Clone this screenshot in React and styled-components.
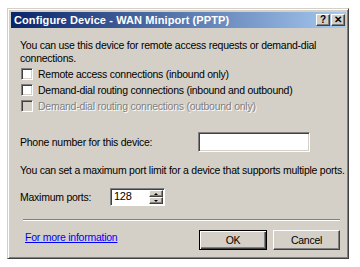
import React from 'react';
import styled, { createGlobalStyle } from 'styled-components';

const Global = createGlobalStyle`
  body {
    margin: 0;
    background: #fff;
    font-family: "Liberation Sans", Arial, sans-serif;
  }
`;

const Page = styled.div`
  padding: 8px 0 0 7px;
`;

const Window = styled.div`
  width: 342px;
  height: 251px;
  box-sizing: border-box;
  background: #d4d0c8;
  border: 1px solid;
  border-color: #d4d0c8 #404040 #404040 #d4d0c8;
  box-shadow: inset 1px 1px 0 #fff, inset -1px -1px 0 #808080;
  padding: 3px 2px 3px 3px;
  display: flex;
  flex-direction: column;
`;

const TitleBar = styled.div`
  height: 16px;
  flex-shrink: 0;
  display: flex;
  align-items: center;
  padding: 0 1px 0 3px;
  background: linear-gradient(to right, #0a246a, #a6caf0);
`;

const Title = styled.div`
  flex: 1;
  color: #fff;
  font-weight: bold;
  font-size: 11px;
  letter-spacing: 0.1px;
  white-space: nowrap;
`;

const CapButton = styled.div`
  width: 14px;
  height: 12px;
  box-sizing: border-box;
  background: #d4d0c8;
  border: 1px solid;
  border-color: #fff #404040 #404040 #fff;
  box-shadow: inset -1px -1px 0 #808080;
  margin-left: ${p => p.gap || 0}px;
  font-size: 10px;
  font-weight: bold;
  line-height: 10px;
  text-align: center;
  color: #000;
`;

const Body = styled.div`
  flex: 1;
  padding: 11px 6px 0 9px;
  font-size: 10.5px;
  letter-spacing: -0.25px;
  color: #000;
  display: flex;
  flex-direction: column;
  white-space: nowrap;
`;

const Para = styled.div`
  line-height: 13px;
  margin-top: ${p => p.top || 0}px;
`;

const CheckRow = styled.label`
  display: flex;
  align-items: center;
  gap: 5px;
  height: 16px;
  padding-left: 1px;
  margin-top: ${p => p.top || 0}px;
  color: ${p => (p.disabled ? '#808080' : '#000')};
  text-shadow: ${p => (p.disabled ? '1px 1px 0 #fff' : 'none')};
`;

const Box = styled.span`
  width: 12px;
  height: 12px;
  flex-shrink: 0;
  box-sizing: border-box;
  background: ${p => (p.disabled ? '#d4d0c8' : '#fff')};
  border: 1px solid;
  border-color: #808080 #fff #fff #808080;
  box-shadow: inset 1px 1px 0 #404040, inset -1px -1px 0 #d4d0c8;
`;

const FieldRow = styled.div`
  display: flex;
  align-items: center;
  margin-top: ${p => p.top || 0}px;
`;

const FieldLabel = styled.div`
  width: ${p => p.w}px;
`;

const TextBox = styled.div`
  width: ${p => p.w}px;
  height: 20px;
  box-sizing: border-box;
  background: #fff;
  border: 1px solid;
  border-color: #808080 #fff #fff #808080;
  box-shadow: inset 1px 1px 0 #404040, inset -1px -1px 0 #d4d0c8;
`;

const Spin = styled.div`
  display: flex;
  height: 18px;
  box-sizing: border-box;
  border: 1px solid;
  border-color: #808080 #fff #fff #808080;
  box-shadow: inset 1px 1px 0 #404040;
  background: #fff;
`;

const SpinText = styled.div`
  width: 35px;
  padding: 1px 0 0 3px;
  font-size: 11px;
`;

const SpinArrows = styled.div`
  display: flex;
  flex-direction: column;
  width: 14px;
  padding: 1px 1px 1px 0;
`;

const Arrow = styled.div`
  flex: 1;
  background: #d4d0c8;
  border: 1px solid;
  border-color: #fff #404040 #404040 #fff;
  box-shadow: inset -1px -1px 0 #808080;
  display: flex;
  align-items: center;
  justify-content: center;
  &::after {
    content: '';
    border-left: 2px solid transparent;
    border-right: 2px solid transparent;
    ${p => (p.up ? 'border-bottom: 2px solid #000;' : 'border-top: 2px solid #000;')}
  }
`;

const Separator = styled.div`
  margin: 13px 0 0 3px;
  height: 0;
  border-top: 1px solid #808080;
  border-bottom: 1px solid #fff;
`;

const Footer = styled.div`
  display: flex;
  align-items: flex-start;
  margin-top: 9px;
`;

const Link = styled.a`
  flex: 1;
  color: #0000ff;
  text-decoration: underline;
  padding: 1px 0 0 5px;
`;

const Button = styled.div`
  width: ${p => p.w}px;
  height: 20px;
  box-sizing: border-box;
  margin-left: ${p => p.gap || 0}px;
  background: #d4d0c8;
  border: 1px solid;
  border-color: ${p => (p.def ? '#000' : '#fff #404040 #404040 #fff')};
  box-shadow: ${p =>
    p.def
      ? 'inset 1px 1px 0 #fff, inset -1px -1px 0 #404040, inset -2px -2px 0 #808080'
      : 'inset -1px -1px 0 #808080'};
  display: flex;
  align-items: center;
  justify-content: center;
`;

export default function App() {
  return (
    <>
      <Global />
      <Page>
        <Window>
          <TitleBar>
            <Title>Configure Device - WAN Miniport (PPTP)</Title>
            <CapButton>?</CapButton>
            <CapButton gap={1}>✕</CapButton>
          </TitleBar>
          <Body>
            <Para>
              You can use this device for remote access requests or demand-dial
              <br />
              connections.
            </Para>
            <CheckRow top={1}>
              <Box /> Remote access connections (inbound only)
            </CheckRow>
            <CheckRow>
              <Box /> Demand-dial routing connections (inbound and outbound)
            </CheckRow>
            <CheckRow disabled>
              <Box disabled /> Demand-dial routing connections (outbound only)
            </CheckRow>
            <FieldRow top={18}>
              <FieldLabel w={178}>Phone number for this device:</FieldLabel>
              <TextBox w={112} />
            </FieldRow>
            <Para top={12}>
              You can set a maximum port limit for a device that supports multiple ports.
            </Para>
            <FieldRow top={11}>
              <FieldLabel w={90}>Maximum ports:</FieldLabel>
              <Spin>
                <SpinText>128</SpinText>
                <SpinArrows>
                  <Arrow up />
                  <Arrow />
                </SpinArrows>
              </Spin>
            </FieldRow>
            <Separator />
            <Footer>
              <Link href="#">For more information</Link>
              <Button def w={68}>OK</Button>
              <Button gap={6} w={67}>Cancel</Button>
            </Footer>
          </Body>
        </Window>
      </Page>
    </>
  );
}
